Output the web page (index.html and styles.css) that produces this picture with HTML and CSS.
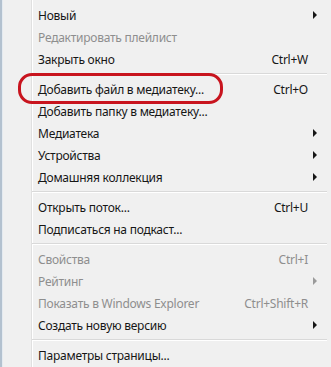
FILE: index.html
```html
<!DOCTYPE html>
<html lang="ru">
<head>
  <meta charset="UTF-8" />
  <title>Меню файла</title>
  <link rel="stylesheet" href="styles.css">
</head>
<body>
  <div class="menu">
    <div class="item"><span class="label">Новый</span><span class="key"></span><span class="arrow"></span></div>
    <div class="item disabled"><span class="label">Редактировать плейлист</span><span class="key"></span><span class="sub"></span></div>
    <div class="item"><span class="label">Закрыть окно</span><span class="key">Ctrl+W</span><span class="sub"></span></div>
    <div class="sep"></div>
    <div class="item marked"><span class="label">Добавить файл в медиатеку...</span><span class="key">Ctrl+O</span><span class="sub"></span></div>
    <div class="item"><span class="label">Добавить папку в медиатеку...</span><span class="key"></span><span class="sub"></span></div>
    <div class="item"><span class="label">Медиатека</span><span class="key"></span><span class="arrow"></span></div>
    <div class="item"><span class="label">Устройства</span><span class="key"></span><span class="arrow"></span></div>
    <div class="item"><span class="label">Домашняя коллекция</span><span class="key"></span><span class="arrow"></span></div>
    <div class="sep"></div>
    <div class="item"><span class="label">Открыть поток...</span><span class="key">Ctrl+U</span><span class="sub"></span></div>
    <div class="item"><span class="label">Подписаться на подкаст...</span><span class="key"></span><span class="sub"></span></div>
    <div class="sep"></div>
    <div class="item disabled"><span class="label">Свойства</span><span class="key">Ctrl+I</span><span class="sub"></span></div>
    <div class="item disabled"><span class="label">Рейтинг</span><span class="key"></span><span class="arrow"></span></div>
    <div class="item disabled"><span class="label">Показать в Windows Explorer</span><span class="key">Ctrl+Shift+R</span><span class="sub"></span></div>
    <div class="item"><span class="label">Создать новую версию</span><span class="key"></span><span class="arrow"></span></div>
    <div class="sep"></div>
    <div class="item"><span class="label">Параметры страницы...</span><span class="key"></span><span class="sub"></span></div>
  </div>
</body>
</html>
```

FILE: styles.css
```css
body {
  margin: 0;
  font-family: "Noto Sans", "Open Sans", sans-serif;
  font-size: 12px;
  letter-spacing: -0.25px;
  background: #f0f0f0;
}

.menu {
  width: 331px;
  height: 367px;
  box-sizing: border-box;
  padding-top: 4px;
  border-left: 2px solid #b3c1cf;
  background:
    linear-gradient(to right, transparent 29px, #e0e0e0 29px, #e0e0e0 30px, #ffffff 30px, #ffffff 31px, transparent 31px),
    #f0f0f0;
  color: #161616;
  box-shadow: inset 1px 0 0 #e4eaf0;
}

.item {
  position: relative;
  display: flex;
  align-items: center;
  height: 22px;
  padding-left: 36px;
}

.label {
  flex: 1;
  white-space: nowrap;
}

.key {
  white-space: nowrap;
}

.sub,
.arrow {
  width: 23px;
  height: 22px;
  flex: none;
}

.arrow {
  position: relative;
}

.arrow::after {
  content: "";
  position: absolute;
  left: 5px;
  top: 7px;
  border-top: 4px solid transparent;
  border-bottom: 4px solid transparent;
  border-left: 4px solid #161616;
}

.disabled {
  color: #8e8e8e;
}

.disabled .arrow::after {
  border-left-color: #9a9a9a;
}

.sep {
  height: 8px;
  margin-left: 30px;
  margin-right: 4px;
  display: flex;
  flex-direction: column;
  justify-content: center;
}

.sep::before {
  content: "";
  height: 1px;
  background: #d9d9d9;
  border-bottom: 1px solid #ffffff;
}

.marked::before {
  content: "";
  position: absolute;
  left: 16px;
  top: -5px;
  width: 199px;
  height: 25px;
  border: 3px solid #c8141e;
  border-radius: 14px;
}
```
